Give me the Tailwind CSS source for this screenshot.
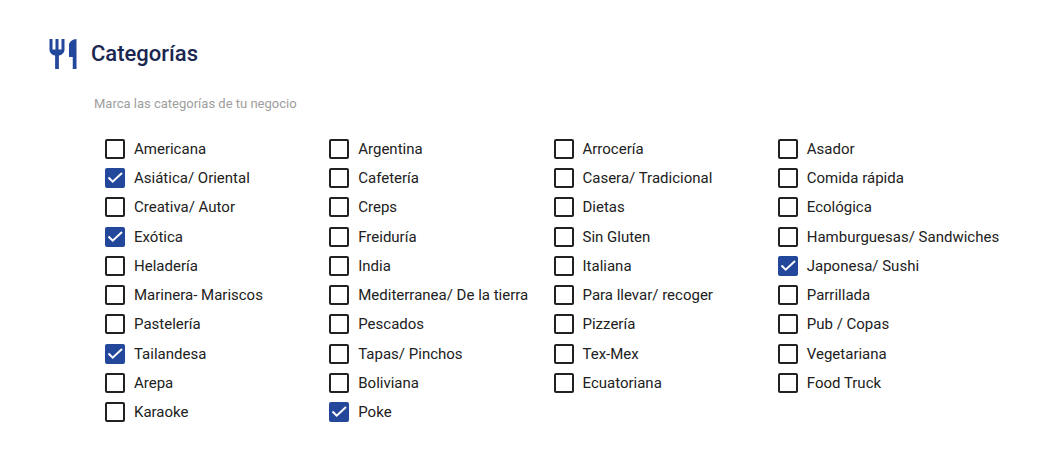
<!DOCTYPE html>
<html lang="es">
<head>
  <meta charset="UTF-8" />
  <meta name="viewport" content="width=device-width, initial-scale=1" />
  <title>Categorías</title>
  <script src="https://cdn.jsdelivr.net/npm/@tailwindcss/browser@4"></script>
</head>
<body class="bg-white font-['Roboto',sans-serif] text-[#212121]">
  <main class="pl-[45px] pr-[47px] pt-9 pb-9">
    <header class="flex items-center gap-2.5">
      <svg class="size-9 shrink-0 fill-[#23479a]" viewBox="0 0 24 24" aria-hidden="true">
        <path d="M11 9H9V2H7v7H5V2H3v7c0 2.12 1.66 3.84 3.75 3.97V22h2.5v-9.03C11.34 12.84 13 11.12 13 9V2h-2v7zm5-3v8h2.5v8H21V2c-2.76 0-5 2.24-5 4z" />
      </svg>
      <h1 class="text-[22px] leading-8 font-medium text-[#1b2750]">Categorías</h1>
    </header>

    <p class="mt-[22px] pl-[49px] text-[13px] leading-5 text-[#9e9e9e]">Marca las categorías de tu negocio</p>

    <form id="categorias" class="mt-5 ml-[60px] grid min-h-[293px] auto-rows-fr grid-cols-4">
      <!-- categorías -->
    </form>
  </main>

  <template id="opcion">
    <label class="flex min-w-0 items-center gap-[9px] text-[15px] leading-5 whitespace-nowrap">
      <span class="grid shrink-0">
        <input type="checkbox" name="categoria" class="peer col-start-1 row-start-1 size-5 appearance-none rounded-xs border-2 border-[#212121] checked:border-[#23479a] checked:bg-[#23479a]" />
        <svg class="pointer-events-none invisible col-start-1 row-start-1 size-5 fill-none stroke-white stroke-2 peer-checked:visible" viewBox="0 0 20 20" aria-hidden="true">
          <path d="M3.5 9.5l4.2 4.2L17 5" />
        </svg>
      </span>
      <span></span>
    </label>
  </template>

  <script>
    const categorias = [
      'Americana', 'Argentina', 'Arrocería', 'Asador',
      'Asiática/ Oriental', 'Cafetería', 'Casera/ Tradicional', 'Comida rápida',
      'Creativa/ Autor', 'Creps', 'Dietas', 'Ecológica',
      'Exótica', 'Freiduría', 'Sin Gluten', 'Hamburguesas/ Sandwiches',
      'Heladería', 'India', 'Italiana', 'Japonesa/ Sushi',
      'Marinera- Mariscos', 'Mediterranea/ De la tierra', 'Para llevar/ recoger', 'Parrillada',
      'Pastelería', 'Pescados', 'Pizzería', 'Pub / Copas',
      'Tailandesa', 'Tapas/ Pinchos', 'Tex-Mex', 'Vegetariana',
      'Arepa', 'Boliviana', 'Ecuatoriana', 'Food Truck',
      'Karaoke', 'Poke'
    ];
    const marcadas = ['Asiática/ Oriental', 'Exótica', 'Japonesa/ Sushi', 'Tailandesa', 'Poke'];

    const form = document.getElementById('categorias');
    const opcion = document.getElementById('opcion');

    categorias.forEach((nombre) => {
      const label = opcion.content.firstElementChild.cloneNode(true);
      const input = label.querySelector('input');
      input.value = nombre;
      input.checked = marcadas.includes(nombre);
      label.lastElementChild.textContent = nombre;
      form.appendChild(label);
    });
  </script>
</body>
</html>
